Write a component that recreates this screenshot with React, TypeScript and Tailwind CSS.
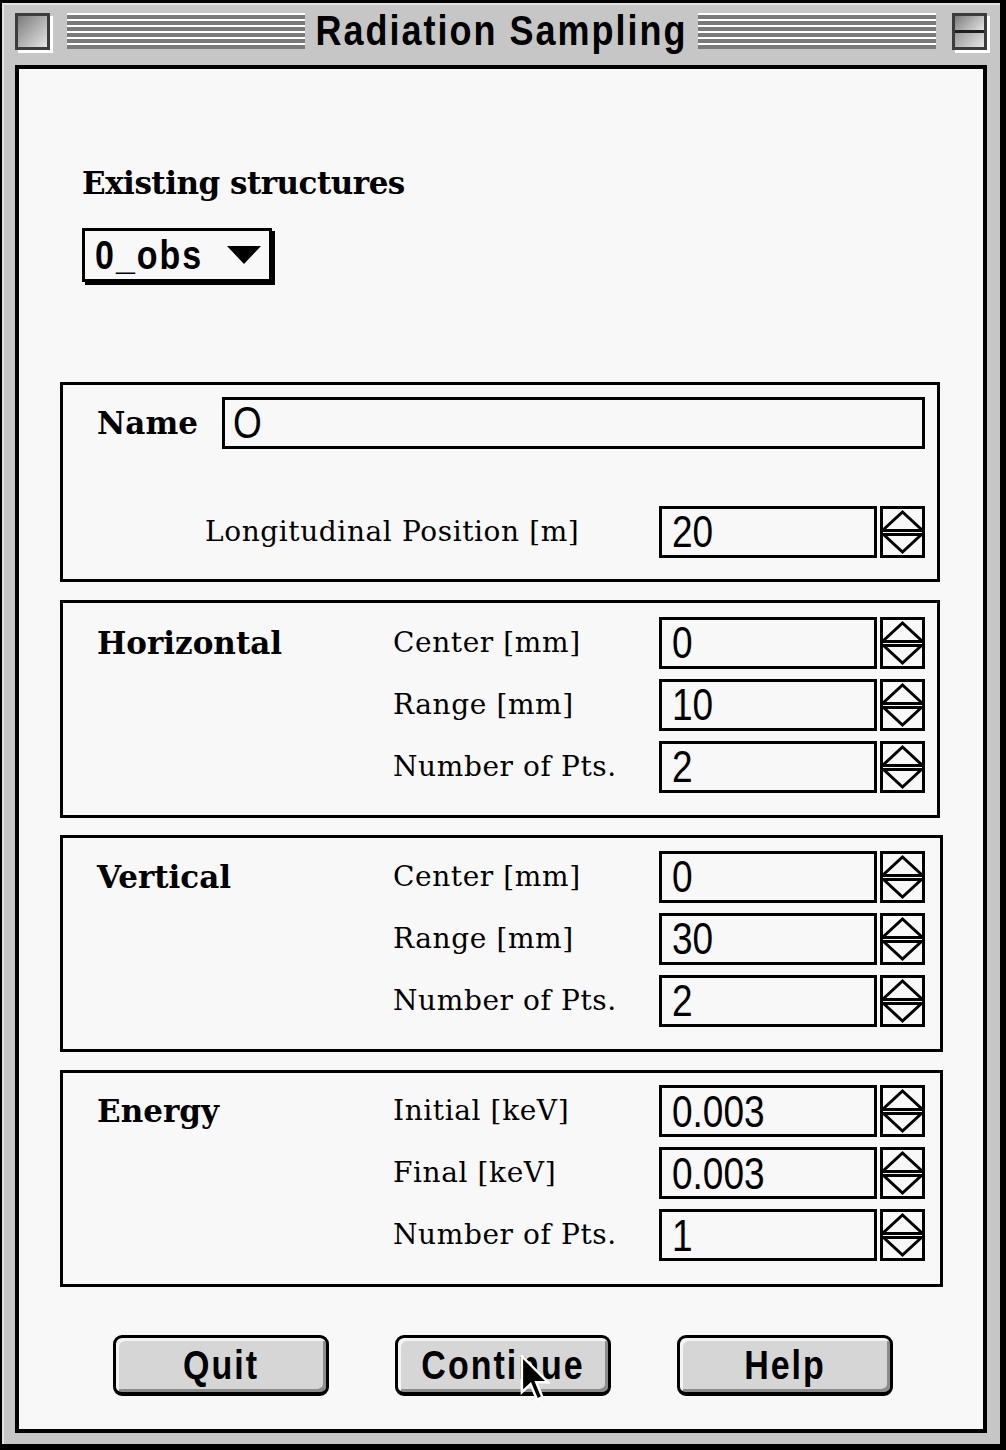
import type { ReactNode } from "react";

const serif = "font-['DejaVu_Serif','Liberation_Serif',serif]";
const chicago = "font-['Liberation_Sans',Arial,sans-serif] font-bold";
const geneva = "font-['Liberation_Sans',Arial,sans-serif]";

function Stripes() {
  return (
    <div className="h-[36px] flex-1 bg-[repeating-linear-gradient(to_bottom,#ffffff_0px,#ffffff_2px,#7a7a7a_2px,#7a7a7a_6px)]" />
  );
}

function CloseBox() {
  return (
    <div className="h-[37px] w-[35px] shrink-0 border-[3px] border-[#3c3c3c] bg-[linear-gradient(135deg,#7c7c7c,#e4e4e4)] shadow-[3px_3px_0_#ffffff]" />
  );
}

function ShadeBox() {
  return (
    <div className="flex h-[37px] w-[35px] shrink-0 flex-col border-[3px] border-[#3c3c3c] shadow-[3px_3px_0_#ffffff]">
      <div className="flex-1 bg-[linear-gradient(135deg,#7c7c7c,#e4e4e4)]" />
      <div className="h-[3px] bg-[#1e1e1e]" />
      <div className="flex-1 bg-[linear-gradient(135deg,#9a9a9a,#e4e4e4)]" />
    </div>
  );
}

function Spinner() {
  return (
    <div className="h-[52px] w-[45px] shrink-0 border-[3px] border-black bg-[#f8f8f8]">
      <svg viewBox="0 0 39 46" className="block h-[46px] w-[39px]">
        <polyline points="0,21 19.5,3 39,21" fill="none" stroke="black" strokeWidth="3" />
        <line x1="0" y1="21.5" x2="39" y2="21.5" stroke="black" strokeWidth="3" />
        <line x1="0" y1="25.5" x2="39" y2="25.5" stroke="black" strokeWidth="3" />
        <polyline points="0,25 19.5,43 39,25" fill="none" stroke="black" strokeWidth="3" />
      </svg>
    </div>
  );
}

function FieldText({ children }: { children: ReactNode }) {
  return <span className="inline-block origin-center scale-y-[1.2]">{children}</span>;
}

function NumField({ value }: { value: string }) {
  return (
    <div className="flex items-center gap-[3px]">
      <div className={`flex h-[52px] w-[218px] items-center border-[3px] border-black pl-[10px] text-[37px] leading-none text-black ${geneva}`}>
        <FieldText>{value}</FieldText>
      </div>
      <Spinner />
    </div>
  );
}

function Row({ title, label, value }: { title?: string; label: string; value: string }) {
  return (
    <div className="flex h-[52px] items-center">
      <div className={`w-[296px] text-[31px] font-bold text-black ${serif}`}>{title}</div>
      <div className={`w-[266px] text-[28px] tracking-[0.6px] text-black ${serif}`}>{label}</div>
      <NumField value={value} />
    </div>
  );
}

function Panel({ wide, className = "", children }: { wide?: boolean; className?: string; children: ReactNode }) {
  return (
    <section
      className={`ml-[41px] flex flex-col gap-[10px] border-[3px] border-black pl-[34px] ${wide ? "w-[883px]" : "w-[880px]"} ${className}`}
    >
      {children}
    </section>
  );
}

function MacButton({ label }: { label: string }) {
  return (
    <button
      className={`flex h-[61px] w-[216px] items-center justify-center rounded-[9px] border-[3px] border-b-[4px] border-black bg-[#d6d6d6] text-[34px] tracking-[2px] text-black shadow-[inset_3px_3px_0_#f4f4f4,inset_-3px_-3px_0_#8c8c8c] ${chicago}`}
    >
      <FieldText>{label}</FieldText>
    </button>
  );
}

export default function App() {
  return (
    <div className="relative h-[1450px] w-[1006px] overflow-hidden bg-black">
      <div className="ml-[2px] mt-[3px] flex h-[1441px] w-[998px] flex-col bg-[#c6c6c6] px-[13px] pb-[11px] shadow-[inset_2px_2px_0_#e2e2e2]">
        {/* title bar */}
        <div className="flex h-[62px] shrink-0 items-start pt-[10px]">
          <CloseBox />
          <div className="ml-[17px] flex flex-1 items-center">
            <Stripes />
            <h1 className={`px-[10px] text-[36px] leading-[36px] tracking-[2px] text-black ${chicago}`}>
              <FieldText>Radiation Sampling</FieldText>
            </h1>
            <Stripes />
          </div>
          <div className="ml-[16px]">
            <ShadeBox />
          </div>
        </div>

        {/* content */}
        <div className="flex flex-1 flex-col border-[4px] border-black bg-[#f8f8f8]">
          <div className={`ml-[63px] mt-[96px] text-[31px] font-bold leading-[36px] tracking-[-0.5px] text-black ${serif}`}>
            Existing structures
          </div>
          <div className="ml-[63px] mt-[27px] flex h-[54px] w-[190px] items-center justify-between border-[3px] border-black pl-[10px] pr-[8px] shadow-[3px_3px_0_#000]">
            <span className={`text-[34px] leading-none tracking-[2px] text-black ${chicago}`}>
              <FieldText>0_obs</FieldText>
            </span>
            <svg viewBox="0 0 34 18" className="h-[18px] w-[34px]">
              <polygon points="0,0 34,0 17,18" fill="black" />
            </svg>
          </div>

          {/* Name panel */}
          <section className="ml-[41px] mt-[100px] flex h-[200px] w-[880px] flex-col border-[3px] border-black pl-[34px] pt-[12px]">
            <div className="flex h-[52px] items-center">
              <div className={`w-[125px] text-[31px] font-bold text-black ${serif}`}>Name</div>
              <div className={`flex h-[52px] w-[703px] items-center border-[3px] border-black pl-[8px] text-[37px] leading-none text-black ${geneva}`}>
                <FieldText>O</FieldText>
              </div>
            </div>
            <div className="mt-[57px] flex h-[52px] items-center">
              <div className={`ml-[108px] w-[454px] text-[28px] tracking-[0.6px] text-black ${serif}`}>
                Longitudinal Position [m]
              </div>
              <NumField value="20" />
            </div>
          </section>

          <Panel className="mt-[18px] h-[218px] pt-[14px]">
            <Row title="Horizontal" label="Center [mm]" value="0" />
            <Row label="Range [mm]" value="10" />
            <Row label="Number of Pts." value="2" />
          </Panel>

          <Panel wide className="mt-[17px] h-[217px] pt-[13px]">
            <Row title="Vertical" label="Center [mm]" value="0" />
            <Row label="Range [mm]" value="30" />
            <Row label="Number of Pts." value="2" />
          </Panel>

          <Panel wide className="mt-[18px] h-[217px] pt-[12px]">
            <Row title="Energy" label="Initial [keV]" value="0.003" />
            <Row label="Final [keV]" value="0.003" />
            <Row label="Number of Pts." value="1" />
          </Panel>

          <div className="ml-[94px] mt-[48px] flex gap-[66px]">
            <MacButton label="Quit" />
            <MacButton label="Continue" />
            <MacButton label="Help" />
          </div>
        </div>
      </div>

      {/* mouse pointer */}
      <svg viewBox="0 0 12 19" className="absolute left-[520px] top-[1355px] h-[47px] w-[31px]">
        <polygon points="0.5,0.5 0.5,15 4,11.8 6.6,18 8.8,17 6.3,11 11,11" fill="black" stroke="white" strokeWidth="1" />
      </svg>
    </div>
  );
}
